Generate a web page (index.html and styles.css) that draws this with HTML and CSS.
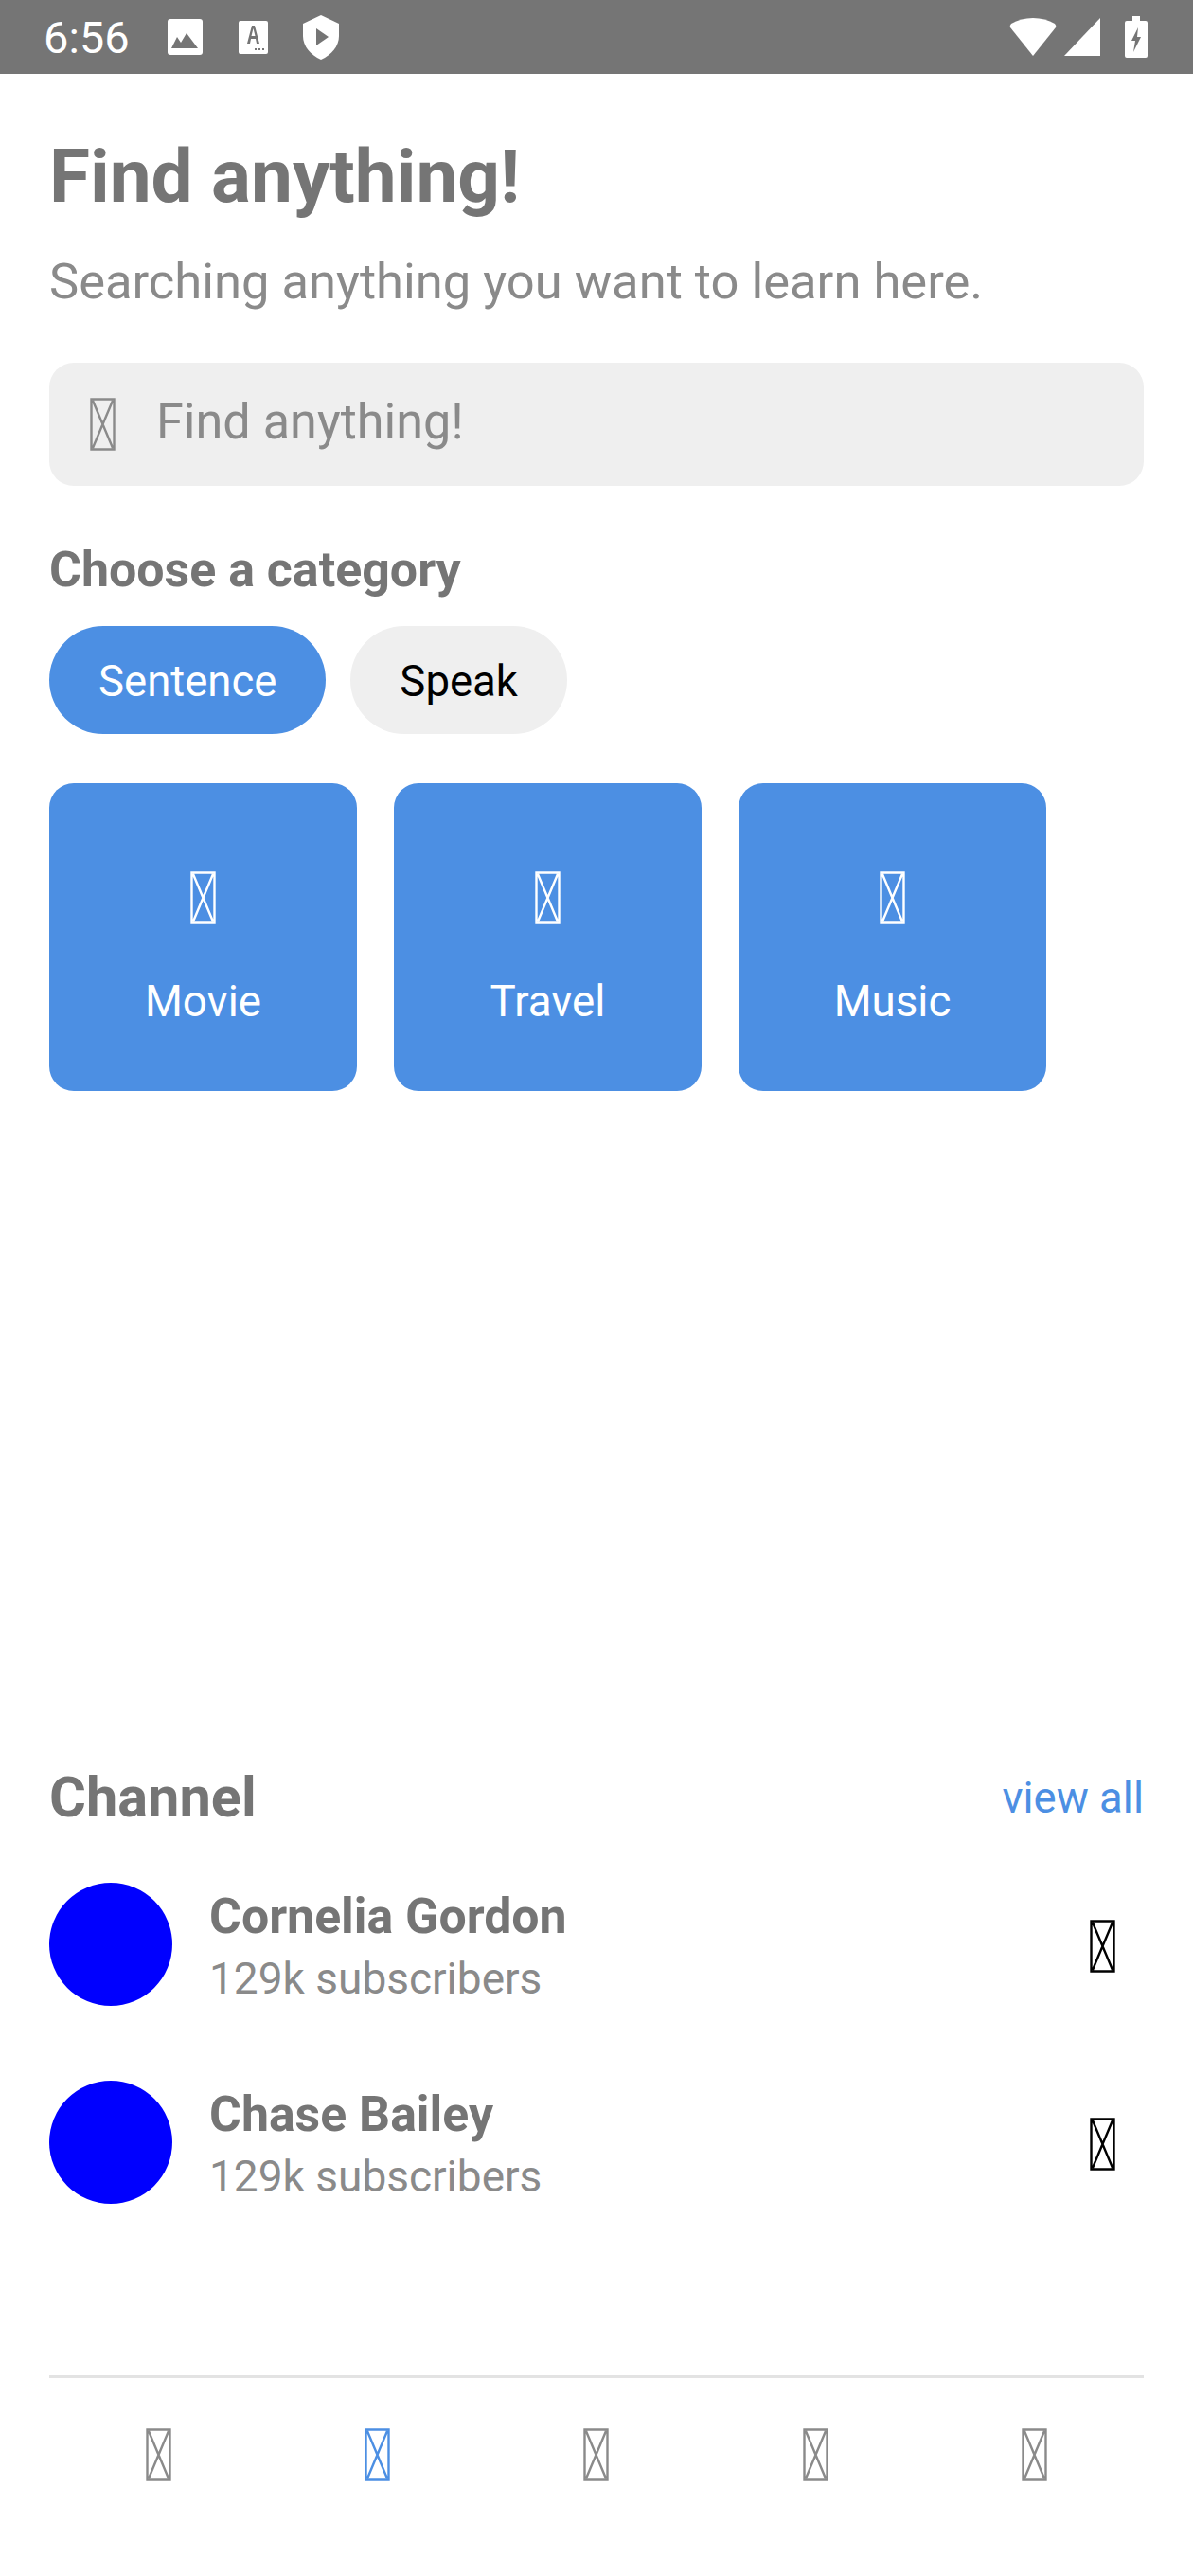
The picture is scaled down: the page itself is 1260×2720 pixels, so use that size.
FILE: index.html
```html
<!DOCTYPE html>
<html>
<head>
	<title>Find anything</title>
	<link rel="stylesheet" href="styles.css">
</head>
<body>
	<svg class="defs" width="0" height="0">
		<symbol id="tofu" viewBox="0 0 27 56">
			<path d="M1.5 1.5H25.5V54.5H1.5ZM3 3L24 53M24 3L3 53" fill="none" stroke="currentColor" stroke-width="2.4"/>
		</symbol>
	</svg>

	<div class="status">
		<span class="time">6:56</span>
		<svg class="st-icon st-image" viewBox="0 0 37 38"><rect width="37" height="38" rx="3" fill="#fff"/><path d="M4 31L10 19L14 25L20 15L32 31Z" fill="#757575"/></svg>
		<svg class="st-icon st-font" viewBox="0 0 31 35"><rect width="31" height="35" rx="2" fill="#fff"/><path d="M9 24L14 5H17L22 24H19L18 19H13L12 24ZM13.500 16H17.500L15.500 8Z" fill="#757575"/><path d="M17 29h2v2h-2zM21 29h2v2h-2zM25 29h2v2h-2z" fill="#757575"/></svg>
		<svg class="st-icon st-shield" viewBox="0 0 38 47"><path d="M19 0L38 9V22C38 33 30 42 19 47C8 42 0 33 0 22V9Z" fill="#fff"/><path d="M14 14L27 23L14 32Z" fill="#757575"/></svg>
		<span class="st-space"></span>
		<svg class="st-icon st-wifi" viewBox="0 0 50 40"><path d="M25 40L1 10Q0 8 2 6Q12 0 25 0Q38 0 48 6Q50 8 49 10Z" fill="#fff"/></svg>
		<svg class="st-icon st-signal" viewBox="0 0 38 40"><path d="M38 0V40H0Z" fill="#fff"/></svg>
		<svg class="st-icon st-battery" viewBox="0 0 24 44"><path d="M8 0H16V5H22Q24 5 24 7V42Q24 44 22 44H2Q0 44 0 42V7Q0 5 2 5H8Z" fill="#fff"/><path d="M14 12L7 26H11L9 38L17 22H13Z" fill="#757575"/></svg>
	</div>

	<div class="page">
		<h1>Find anything!</h1>
		<p class="sub">Searching anything you want to learn here.</p>

		<div class="search">
			<svg class="tofu"><use href="#tofu"/></svg>
			<span>Find anything!</span>
		</div>

		<h2>Choose a category</h2>
		<div class="chips">
			<span class="chip active">Sentence</span>
			<span class="chip">Speak</span>
		</div>

		<div class="cards">
			<div class="card"><svg class="tofu"><use href="#tofu"/></svg><span>Movie</span></div>
			<div class="card"><svg class="tofu"><use href="#tofu"/></svg><span>Travel</span></div>
			<div class="card"><svg class="tofu"><use href="#tofu"/></svg><span>Music</span></div>
		</div>

		<div class="channel-head">
			<h3>Channel</h3>
			<a class="view-all">view all</a>
		</div>

		<div class="channel">
			<div class="avatar"></div>
			<div class="info">
				<div class="name">Cornelia Gordon</div>
				<div class="subs">129k subscribers</div>
			</div>
			<svg class="tofu"><use href="#tofu"/></svg>
		</div>
		<div class="channel">
			<div class="avatar"></div>
			<div class="info">
				<div class="name">Chase Bailey</div>
				<div class="subs">129k subscribers</div>
			</div>
			<svg class="tofu"><use href="#tofu"/></svg>
		</div>

		<div class="tabs">
			<svg class="tofu"><use href="#tofu"/></svg>
			<svg class="tofu on"><use href="#tofu"/></svg>
			<svg class="tofu"><use href="#tofu"/></svg>
			<svg class="tofu"><use href="#tofu"/></svg>
			<svg class="tofu"><use href="#tofu"/></svg>
		</div>
	</div>
</body>
</html>
```

FILE: styles.css
```css
html *{
	margin: 0;
	padding: 0;
	box-sizing: border-box;
	font-family: Roboto, sans-serif;
}
body{
	width: 1260px;
	height: 2720px;
	background: #fff;
	overflow: hidden;
}
.defs{
	display: block;
	height: 0;
}
.tofu{
	display: block;
	width: 27px;
	height: 56px;
	flex: none;
}

/* status bar */
.status{
	height: 78px;
	background: #757575;
	display: flex;
	align-items: center;
	padding: 0 48px 0 46px;
	color: #fff;
}
.time{
	font-size: 47px;
	width: 131px;
}
.st-icon{
	display: block;
}
.st-image{
	width: 37px;
	height: 38px;
	margin-right: 38px;
}
.st-font{
	width: 31px;
	height: 35px;
	margin-right: 37px;
}
.st-shield{
	width: 38px;
	height: 47px;
}
.st-space{
	flex: 1;
}
.st-wifi{
	width: 50px;
	height: 40px;
	margin-right: 8px;
}
.st-signal{
	width: 38px;
	height: 40px;
	margin-right: 26px;
}
.st-battery{
	width: 24px;
	height: 44px;
}

.page{
	padding: 0 52px;
}
h1{
	font-size: 78.3px;
	line-height: 92px;
	font-weight: 700;
	color: #757575;
	margin-top: 62px;
}
.sub{
	font-size: 52.5px;
	line-height: 62px;
	color: #8a8a8a;
	margin-top: 34px;
}

.search{
	height: 130px;
	margin-top: 55px;
	background: #efefef;
	border-radius: 26px;
	display: flex;
	align-items: center;
	padding-left: 43px;
	color: #8a8a8a;
	font-size: 52.2px;
}
.search span{
	margin-left: 43px;
	margin-top: -6px;
}

h2{
	font-size: 51.9px;
	line-height: 60px;
	font-weight: 700;
	color: #757575;
	margin-top: 59px;
}
.chips{
	display: flex;
	gap: 26px;
	margin-top: 29px;
}
.chip{
	height: 114px;
	padding: 2px 52px 0;
	border-radius: 57px;
	background: #efefef;
	color: #000;
	font-size: 45.5px;
	display: flex;
	align-items: center;
}
.chip.active{
	background: #4c8fe3;
	color: #fff;
}

.cards{
	display: flex;
	gap: 39px;
	margin-top: 52px;
}
.card{
	width: 325px;
	height: 325px;
	background: #4c8fe3;
	border-radius: 26px;
	color: #fff;
	font-size: 45.7px;
	display: flex;
	flex-direction: column;
	align-items: center;
	padding-top: 93px;
}
.card span{
	margin-top: 55px;
}

.channel-head{
	display: flex;
	justify-content: space-between;
	align-items: center;
	margin-top: 716px;
	height: 60px;
}
h3{
	font-size: 59.5px;
	font-weight: 700;
	color: #757575;
}
.view-all{
	font-size: 45.5px;
	color: #4c8fe3;
}

.channel{
	display: flex;
	align-items: center;
	height: 130px;
	margin-top: 79px;
	padding-right: 30px;
}
.channel-head + .channel{
	margin-top: 60px;
}
.avatar{
	width: 130px;
	height: 130px;
	border-radius: 50%;
	background: #00f;
	flex: none;
}
.info{
	flex: 1;
	margin-left: 39px;
	padding-top: 4px;
}
.name{
	font-size: 51.8px;
	line-height: 60px;
	font-weight: 700;
	color: #757575;
}
.subs{
	font-size: 46px;
	line-height: 54px;
	color: #8a8a8a;
	margin-top: 8px;
}
.channel .tofu{
	color: #000;
	margin-top: 4px;
}

.tabs{
	display: grid;
	grid-template-columns: repeat(5, 1fr);
	justify-items: center;
	margin-top: 181px;
	border-top: 3px solid #e3e3e3;
	padding-top: 53px;
	color: #8a8a8a;
}
.tabs .on{
	color: #4c8fe3;
}
```
